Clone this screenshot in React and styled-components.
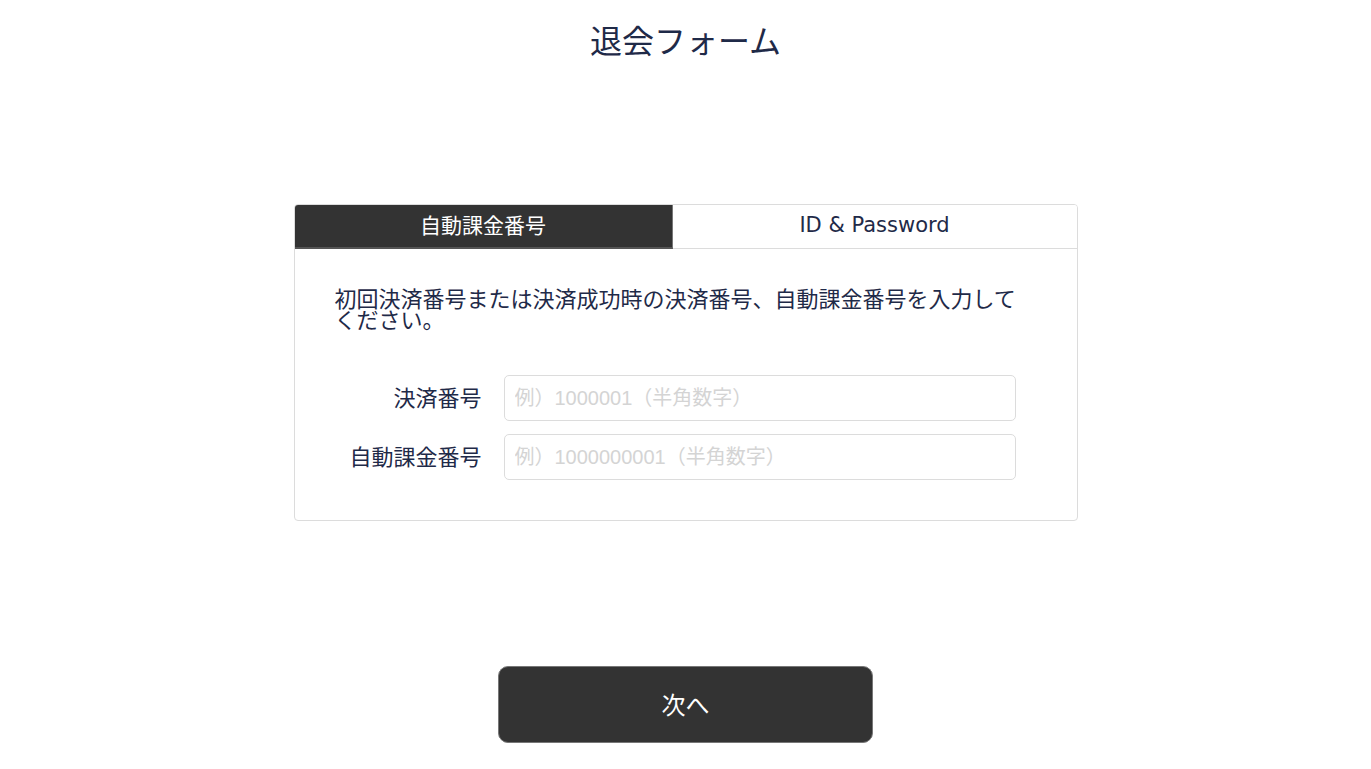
import { useState } from 'react'
import styled, { createGlobalStyle } from 'styled-components'

const GlobalStyle = createGlobalStyle`
  body {
    margin: 0;
    background: #fff;
    color: #1f2a48;
    font-family: "DejaVu Sans", "Noto Sans CJK JP", sans-serif;
  }
`

const Page = styled.div`
  display: flex;
  flex-direction: column;
  align-items: center;
  min-height: 769px;
`

const Title = styled.h1`
  margin: 19px 0 0;
  font-size: 32px;
  font-weight: 400;
  line-height: 40px;
  font-family: "Noto Sans CJK JP", sans-serif;
`

const Card = styled.section`
  margin-top: 145px;
  width: 784px;
  border: 1px solid #dcdcdc;
  border-radius: 4px;
  box-sizing: border-box;
  overflow: hidden;
`

const Tabs = styled.div`
  display: grid;
  grid-template-columns: 378px 1fr;
  height: 44px;
  box-sizing: border-box;
  border-bottom: 1px solid #dcdcdc;
`

const Tab = styled.button`
  border: 0;
  margin: 0;
  padding: 0 0 ${(p) => (p.$active ? '5px' : '3px')};
  font-family: "DejaVu Sans", "Noto Sans CJK JP", sans-serif;
  font-size: 21px;
  cursor: pointer;
  background: ${(p) => (p.$active ? '#333' : '#fff')};
  color: ${(p) => (p.$active ? '#fff' : '#1f2a48')};
  border-right: ${(p) => (p.$active ? '1px solid #777' : '0')};
  border-bottom: ${(p) => (p.$active ? '2px solid #555' : '0')};
  margin-bottom: ${(p) => (p.$active ? '-1px' : '0')};
`

const Body = styled.div`
  padding: 38px 40px 40px;
`

const Note = styled.p`
  margin: 0 0 46px;
  font-size: 22px;
  line-height: 21px;
  font-family: "Noto Sans CJK JP", sans-serif;
  width: 692px;
`

const Form = styled.div`
  display: grid;
  grid-template-columns: 147px 512px;
  column-gap: 22px;
  row-gap: 13px;
  align-items: center;
`

const Label = styled.label`
  text-align: right;
  font-size: 22px;
  padding-bottom: 5px;
  font-family: "Noto Sans CJK JP", sans-serif;
`

const Input = styled.input`
  height: 46px;
  box-sizing: border-box;
  border: 1px solid #dcdcdc;
  border-radius: 5px;
  padding: 0 10px;
  font-size: 20px;
  font-family: "Liberation Sans", "Noto Sans CJK JP", sans-serif;
  color: #1f2a48;
  outline: none;

  &::placeholder {
    color: #d4d4d4;
  }
`

const NextButton = styled.button`
  margin-top: 145px;
  width: 375px;
  height: 77px;
  padding-bottom: 3px;
  background: #333;
  color: #fff;
  border: 1px solid #777;
  border-radius: 10px;
  font-size: 24px;
  font-family: "Noto Sans CJK JP", sans-serif;
  cursor: pointer;
`

const App = () => {
  const [tab, setTab] = useState('auto')

  return (
    <Page>
      <GlobalStyle />
      <Title>退会フォーム</Title>
      <Card>
        <Tabs>
          <Tab $active={tab === 'auto'} onClick={() => setTab('auto')}>
            自動課金番号
          </Tab>
          <Tab $active={tab === 'id'} onClick={() => setTab('id')}>
            ID &amp; Password
          </Tab>
        </Tabs>
        <Body>
          <Note>初回決済番号または決済成功時の決済番号、自動課金番号を入力してください。</Note>
          <Form>
            <Label htmlFor='pay'>決済番号</Label>
            <Input id='pay' placeholder='例）1000001（半角数字）' />
            <Label htmlFor='auto'>自動課金番号</Label>
            <Input id='auto' placeholder='例）1000000001（半角数字）' />
          </Form>
        </Body>
      </Card>
      <NextButton>次へ</NextButton>
    </Page>
  )
}

export default App
